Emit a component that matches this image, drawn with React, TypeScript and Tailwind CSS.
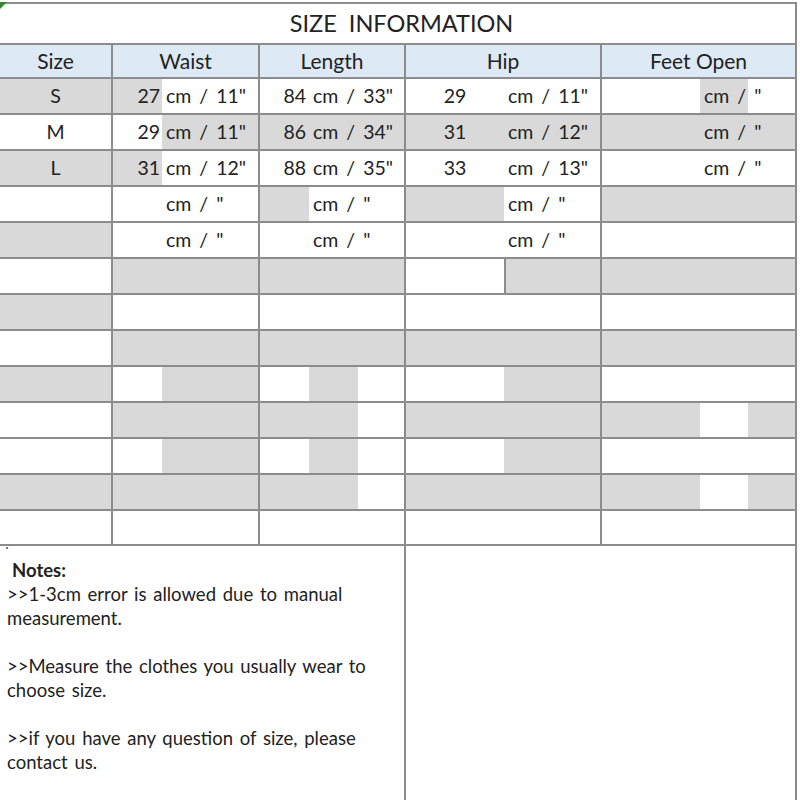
import React from 'react';

type Fill = string; // one char per sub column: g = gray, w = white

type Row = {
  size: string;
  sizeFill: 'g' | 'w';
  waist: Fill;
  length: Fill;
  hip: Fill;
  feet: Fill;
  waistText?: [string, string];
  lengthText?: [string, string];
  hipText?: [string, string];
  feetText?: string;
  hipLine?: boolean;
};

const rows: Row[] = [
  { size: 'S', sizeFill: 'g', waist: 'gw', length: 'www', hip: 'ww', feet: 'wgw', waistText: ['27', 'cm / 11"'], lengthText: ['84', 'cm / 33"'], hipText: ['29', 'cm / 11"'], feetText: 'cm / "' },
  { size: 'M', sizeFill: 'w', waist: 'wg', length: 'ggg', hip: 'gg', feet: 'ggg', waistText: ['29', 'cm / 11"'], lengthText: ['86', 'cm / 34"'], hipText: ['31', 'cm / 12"'], feetText: 'cm / "' },
  { size: 'L', sizeFill: 'g', waist: 'gw', length: 'www', hip: 'ww', feet: 'www', waistText: ['31', 'cm / 12"'], lengthText: ['88', 'cm / 35"'], hipText: ['33', 'cm / 13"'], feetText: 'cm / "' },
  { size: '', sizeFill: 'w', waist: 'ww', length: 'gww', hip: 'gw', feet: 'ggg', waistText: ['', 'cm / "'], lengthText: ['', 'cm / "'], hipText: ['', 'cm / "'] },
  { size: '', sizeFill: 'g', waist: 'ww', length: 'www', hip: 'ww', feet: 'www', waistText: ['', 'cm / "'], lengthText: ['', 'cm / "'], hipText: ['', 'cm / "'] },
  { size: '', sizeFill: 'w', waist: 'gg', length: 'ggg', hip: 'wg', feet: 'ggg', hipLine: true },
  { size: '', sizeFill: 'g', waist: 'ww', length: 'www', hip: 'ww', feet: 'www' },
  { size: '', sizeFill: 'w', waist: 'gg', length: 'ggg', hip: 'gg', feet: 'ggg' },
  { size: '', sizeFill: 'g', waist: 'wg', length: 'wgw', hip: 'wg', feet: 'www' },
  { size: '', sizeFill: 'w', waist: 'gg', length: 'ggw', hip: 'gg', feet: 'gwg' },
  { size: '', sizeFill: 'w', waist: 'wg', length: 'wgw', hip: 'wg', feet: 'www' },
  { size: '', sizeFill: 'g', waist: 'gg', length: 'ggw', hip: 'gg', feet: 'gwg' },
  { size: '', sizeFill: 'w', waist: 'ww', length: 'www', hip: 'ww', feet: 'www' },
];

const bg = (f: string) => (f === 'g' ? 'bg-[#d9d9d9]' : 'bg-white');

function Segments({ fill, line }: { fill: Fill; line?: boolean }) {
  return (
    <>
      {fill.split('').map((f, i) => (
        <div
          key={i}
          className={`row-start-1 ${bg(f)} ${line && i === 1 ? 'border-l-2 border-[#8c8c8c]' : ''}`}
          style={{ gridColumnStart: i + 1 }}
        />
      ))}
    </>
  );
}

export default function App() {
  return (
    <div className="relative w-[800px] h-[800px] overflow-hidden bg-white text-[#222] font-['Lato','Liberation_Sans',sans-serif]">
      {/* excel comment marker */}
      <svg className="absolute left-0 top-0" width="8" height="9" viewBox="0 0 8 9">
        <polygon points="0,2 7,2 0,9" fill="#2e8b2e" />
      </svg>

      <div className="mt-[2px] w-[797px] border-t-2 border-[#8c8c8c]">
        {/* Title */}
        <div className="h-[41px] flex items-center justify-center pl-[8px] border-b-2 border-r-2 border-[#8c8c8c] text-[23.5px] whitespace-pre">
          SIZE  INFORMATION
        </div>

        {/* Header */}
        <div className="h-[34px] flex bg-[#dde9f5] border-b-2 border-[#8c8c8c] text-[21px]">
          <div className="w-[113px] flex items-center justify-center border-r-2 border-[#8c8c8c]">Size</div>
          <div className="w-[147px] flex items-center justify-center border-r-2 border-[#8c8c8c]">Waist</div>
          <div className="w-[146px] flex items-center justify-center border-r-2 border-[#8c8c8c]">Length</div>
          <div className="w-[196px] flex items-center justify-center border-r-2 border-[#8c8c8c]">Hip</div>
          <div className="w-[195px] flex items-center justify-center border-r-2 border-[#8c8c8c]">Feet Open</div>
        </div>

        {/* Body rows */}
        {rows.map((r, idx) => (
          <div
            key={idx}
            className={`flex border-b-2 border-[#8c8c8c] text-[19.5px] [word-spacing:3px] ${idx === rows.length - 1 ? 'h-[35px]' : 'h-[36px]'}`}
          >
            <div className={`w-[113px] flex items-center justify-center border-r-2 border-[#8c8c8c] ${bg(r.sizeFill)}`}>
              {r.size}
            </div>

            <div className="w-[147px] grid grid-cols-[49px_1fr] border-r-2 border-[#8c8c8c]">
              <Segments fill={r.waist} />
              <div className="row-start-1 col-[1/-1] grid grid-cols-[49px_1fr] items-center">
                <span className="text-right pr-[2px]">{r.waistText?.[0]}</span>
                <span className="pl-1 whitespace-pre">{r.waistText?.[1]}</span>
              </div>
            </div>

            <div className="w-[146px] grid grid-cols-[49px_49px_1fr] border-r-2 border-[#8c8c8c]">
              <Segments fill={r.length} />
              <div className="row-start-1 col-[1/-1] grid grid-cols-[49px_1fr] items-center">
                <span className="text-right pr-[3px]">{r.lengthText?.[0]}</span>
                <span className="pl-1 whitespace-pre">{r.lengthText?.[1]}</span>
              </div>
            </div>

            <div className="w-[196px] grid grid-cols-[98px_1fr] border-r-2 border-[#8c8c8c]">
              <Segments fill={r.hip} line={r.hipLine} />
              <div className="row-start-1 col-[1/-1] grid grid-cols-[98px_1fr] items-center">
                <span className="text-center">{r.hipText?.[0]}</span>
                <span className="pl-1 whitespace-pre">{r.hipText?.[1]}</span>
              </div>
            </div>

            <div className="w-[195px] grid grid-cols-[98px_48px_1fr] border-r-2 border-[#8c8c8c]">
              <Segments fill={r.feet} />
              <div className="row-start-1 col-[1/-1] grid grid-cols-[98px_1fr] items-center">
                <span />
                <span className="pl-1 whitespace-pre">{r.feetText}</span>
              </div>
            </div>
          </div>
        ))}

        {/* Notes */}
        <div className="flex h-[260px]">
          <div className="relative w-[406px] border-r-2 border-[#8c8c8c] pt-[12px] pl-[7px] text-[18.5px] leading-[24px] [word-spacing:2px]">
            <span className="absolute left-[6px] top-[1px] w-[2px] h-[2px] bg-[#5a9a5a]" />
            <div className="font-bold pl-[5px]">Notes:</div>
            <div>&gt;&gt;1-3cm error is allowed due to manual</div>
            <div>measurement.</div>
            <div className="h-[24px]" />
            <div>&gt;&gt;Measure the clothes you usually wear to</div>
            <div>choose size.</div>
            <div className="h-[24px]" />
            <div>&gt;&gt;if you have any question of size, please</div>
            <div>contact us.</div>
          </div>
          <div className="flex-1 border-r-2 border-[#8c8c8c]" />
        </div>
      </div>
    </div>
  );
}
